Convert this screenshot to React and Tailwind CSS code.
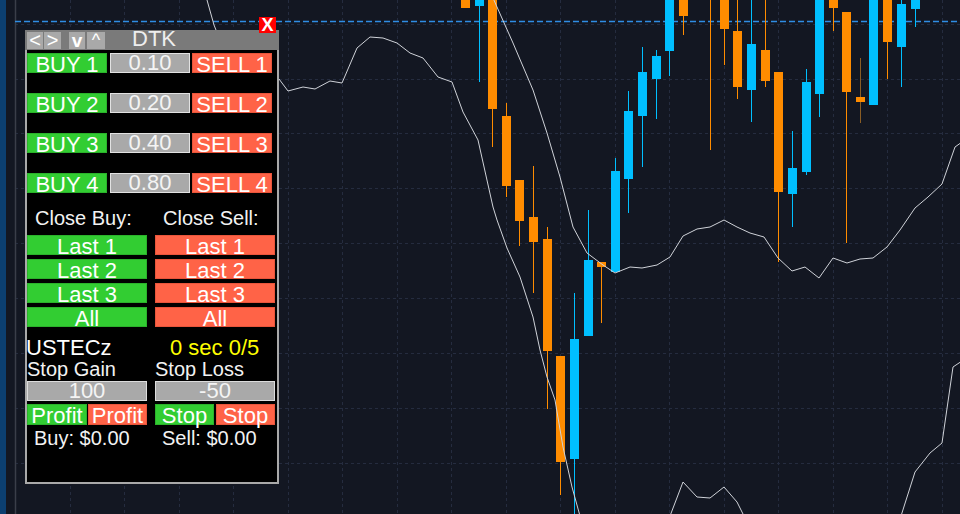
import React from "react";

const candles = [
  [465, "o", 0, 8, 0, 8],
  [479, "b", 0, 6, 0, 82],
  [492, "o", 0, 109, 0, 147],
  [506, "o", 116, 186, 103, 197],
  [519, "o", 180, 221, 180, 246],
  [533, "o", 217, 242, 166, 293],
  [547, "o", 239, 351, 227, 409],
  [560, "o", 356, 462, 356, 495],
  [574, "b", 339, 459, 293, 520],
  [588, "b", 260, 336, 210, 336],
  [601, "o", 262, 267, 262, 323],
  [615, "b", 171, 272, 158, 272],
  [628, "b", 111, 179, 91, 213],
  [642, "b", 72, 116, 47, 167],
  [656, "b", 56, 79, 50, 119],
  [669, "b", -5, 51, -5, 76],
  [683, "o", -5, 16, -5, 35],
  [710, "o", -12, -4, -12, 150],
  [724, "o", -5, 29, -5, 65],
  [737, "o", 31, 87, -5, 99],
  [751, "b", 44, 90, -5, 122],
  [765, "o", 50, 81, -5, 87],
  [778, "o", 72, 192, 72, 262],
  [792, "b", 168, 194, 131, 227],
  [806, "b", 82, 172, 69, 175],
  [819, "b", -5, 94, -5, 117],
  [833, "o", -5, 8, -5, 31],
  [846, "o", 12, 92, 12, 243],
  [860, "o", 97, 102, 58, 123, "#8a5d24"],
  [873, "b", -5, 105, -5, 105],
  [887, "o", -5, 42, -5, 79],
  [901, "b", 4, 47, -5, 87],
  [915, "b", -5, 9, -5, 27],
];

const lineA =
  "207,0 214,25 222,45 250,70 279,79 288,91 303,87 315,89 330,81 342,83 357,48 370,37 383,38 397,43 410,53 423,58 438,77 452,82 463,112 478,140 493,207 497,220 507,248 520,277 533,317 540,350 547,377 555,400 563,447 572,487 580,516";
const lineB =
  "493,-2 513,43 533,90 547,133 560,177 573,227 587,253 603,265 615,273 630,267 642,268 657,265 670,257 683,236 697,229 710,227 724,220 737,227 750,233 764,237 778,258 792,271 805,267 819,278 833,258 847,263 860,259 873,258 887,247 900,230 915,208 928,197 942,184 955,147 962,142";
const lineC = "670,516 683,482 697,497 710,498 724,487 737,502 744,516";
const lineD = "901,516 915,472 930,453 942,443 953,367 962,361";

const hGrid = [24, 79, 133, 188, 243, 298, 353, 408, 463];
const vGrid = [70, 124, 179, 233, 288, 342, 397, 451, 506, 560, 615, 669, 724, 778, 833, 887, 942];

function Chart() {
  return (
    <svg className="block w-full h-full" viewBox="6 0 954 514" preserveAspectRatio="none">
      <rect x="6" y="0" width="954" height="514" fill="#131722" />
      {hGrid.map((y) => (
        <line key={"h" + y} x1="15" x2="960" y1={y + 0.5} y2={y + 0.5} stroke="#252c3f" strokeWidth="1" strokeDasharray="3 3" />
      ))}
      {vGrid.map((x) => (
        <line key={"v" + x} x1={x + 0.5} x2={x + 0.5} y1="0" y2="514" stroke="#252c3f" strokeWidth="1" strokeDasharray="3 3" />
      ))}
      <line x1="15.5" x2="15.5" y1="0" y2="514" stroke="#3a3e49" strokeWidth="1.5" />
      <line x1="15" x2="960" y1="21.5" y2="21.5" stroke="#2f8de4" strokeWidth="1.3" strokeDasharray="6 3" />
      {candles.map(([cx, c, bt, bb, wt, wb, wc]) => {
        const col = c === "o" ? "#ff8c00" : "#00bfff";
        return (
          <g key={cx}>
            <line x1={cx + 0.5} x2={cx + 0.5} y1={wt} y2={wb} stroke={wc || col} strokeWidth="1" />
            <rect x={cx - 4} y={bt} width="9" height={Math.max(bb - bt, 1)} fill={col} />
          </g>
        );
      })}
      <polyline points={lineA} fill="none" stroke="#cfd2d8" strokeWidth="1" />
      <polyline points={lineB} fill="none" stroke="#cfd2d8" strokeWidth="1" />
      <polyline points={lineC} fill="none" stroke="#cfd2d8" strokeWidth="1" />
      <polyline points={lineD} fill="none" stroke="#cfd2d8" strokeWidth="1" />
    </svg>
  );
}

function TitleBtn({ children, className = "" }) {
  return (
    <div className={"h-[17px] bg-[#a9a9a9] flex items-center justify-center leading-[17px] text-white " + className}>
      {children}
    </div>
  );
}

const green = "bg-[#32cd32] border border-[#2bb22b]";
const red = "bg-[#ff6347] border border-[#e8553b]";

function Btn({ cls, children, w = "w-[80px]", h = "h-[20px]" }) {
  return (
    <div className={`${w} ${h} ${cls} box-border text-center text-[22px] leading-[20px] pt-[1px] text-white overflow-visible whitespace-nowrap`}>
      {children}
    </div>
  );
}

export default function App() {
  const lots = ["0.10", "0.20", "0.40", "0.80"];
  return (
    <div className="relative w-[960px] h-[514px] overflow-hidden flex bg-[#131722] font-['Liberation_Sans',Arial,sans-serif]">
      <div className="w-[6px] h-full bg-[#0c3f70]" />
      <div className="flex-1 h-full">
        <Chart />
      </div>

      <div className="absolute left-[25px] top-[30px] w-[254px] h-[454px] flex flex-col text-white">
        <div className="h-[20px] bg-[#7a7a7a] flex items-start">
          <div className="flex mt-[2px] ml-[2px]">
            <TitleBtn className="w-[16px] text-[20px]">&lt;</TitleBtn>
            <TitleBtn className="w-[17px] ml-[1px] text-[20px]">&gt;</TitleBtn>
            <TitleBtn className="w-[16px] ml-[8px] text-[19px] font-bold">v</TitleBtn>
            <TitleBtn className="w-[18px] ml-[2px] text-[18px]">^</TitleBtn>
          </div>
          <span className="ml-[27px] text-[22px] leading-[17px] text-[#eeeeee]">DTK</span>
        </div>
        <div className="absolute left-[234px] top-[-13px] w-[17px] h-[16px] bg-[#ff0000] flex items-center justify-center text-[18px] leading-none font-bold text-white">
          X
        </div>

        <div className="flex-1 bg-black border-2 border-t-0 border-[#a9a9a9] pt-[3px] flex flex-col">
          <div className="flex flex-col gap-[20px]">
            {lots.map((v, i) => (
              <div key={v} className="flex">
                <Btn cls={green}>BUY {i + 1}</Btn>
                <div className="ml-[3px] w-[80px] h-[20px] box-border bg-[#a9a9a9] border border-[#e2e2e2] text-center text-[22px] leading-[18px] text-[#f4f4f4]">
                  {v}
                </div>
                <div className="ml-[2px]">
                  <Btn cls={red}>SELL {i + 1}</Btn>
                </div>
              </div>
            ))}
          </div>

          <div className="grid grid-cols-[120px_120px] gap-x-[8px] mt-[14px] text-[20px] leading-[22px] text-[#f2f2f2]">
            <div className="pl-[8px] whitespace-nowrap">Close Buy:</div>
            <div className="pl-[8px] whitespace-nowrap">Close Sell:</div>
          </div>

          <div className="grid grid-cols-[120px_120px] gap-x-[8px] gap-y-[4px] mt-[6px]">
            {["Last 1", "Last 2", "Last 3", "All"].map((t) => (
              <React.Fragment key={t}>
                <Btn cls={green} w="w-[120px]">{t}</Btn>
                <Btn cls={red} w="w-[120px]">{t}</Btn>
              </React.Fragment>
            ))}
          </div>

          <div className="grid grid-cols-[120px_120px] gap-x-[8px] mt-[10px] text-[22px] leading-[22px]">
            <div className="-ml-[1px] whitespace-nowrap">USTECz</div>
            <div className="pl-[15px] text-[#ffff00] whitespace-nowrap">0 sec 0/5</div>
          </div>

          <div className="grid grid-cols-[120px_120px] gap-x-[8px] text-[20px] leading-[20px] text-[#f2f2f2]">
            <div className="whitespace-nowrap">Stop Gain</div>
            <div className="whitespace-nowrap">Stop Loss</div>
          </div>

          <div className="grid grid-cols-[120px_120px] gap-x-[8px] mt-[2px]">
            {["100", "-50"].map((v) => (
              <div key={v} className="h-[20px] box-border bg-[#a9a9a9] border border-[#dcdcdc] text-center text-[22px] leading-[18px] text-[#f4f4f4]">
                {v}
              </div>
            ))}
          </div>

          <div className="flex mt-[3px]">
            <Btn cls={green} w="w-[60px]" h="h-[21px]">Profit</Btn>
            <div className="ml-[1px]">
              <Btn cls={red} w="w-[59px]" h="h-[21px]">Profit</Btn>
            </div>
            <div className="ml-[8px]">
              <Btn cls={green} w="w-[59px]" h="h-[21px]">Stop</Btn>
            </div>
            <div className="ml-[2px]">
              <Btn cls={red} w="w-[59px]" h="h-[21px]">Stop</Btn>
            </div>
          </div>

          <div className="grid grid-cols-[120px_120px] gap-x-[8px] mt-[3px] text-[20px] leading-[20px] text-[#f2f2f2]">
            <div className="pl-[7px] whitespace-nowrap">Buy: $0.00</div>
            <div className="pl-[7px] whitespace-nowrap">Sell: $0.00</div>
          </div>
        </div>
      </div>
    </div>
  );
}
